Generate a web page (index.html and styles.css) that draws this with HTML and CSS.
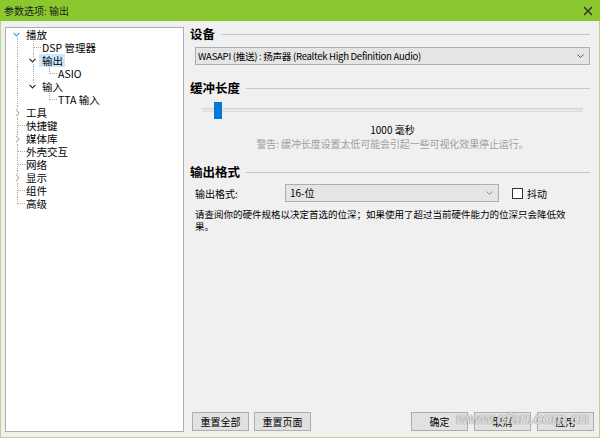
FILE: index.html
```html
<!DOCTYPE html>
<html lang="zh-CN">
<head>
<meta charset="utf-8">
<title>参数选项: 输出</title>
<link rel="stylesheet" href="styles.css">
</head>
<body>
<div class="window">
  <div class="titlebar">
    <span class="title">参数选项: 输出</span>
    <svg class="close" width="10" height="10" viewBox="0 0 10 10"><path d="M1 1L9 9M9 1L1 9" stroke="#2a2a2a" stroke-width="1.3" fill="none"/></svg>
  </div>
  <div class="content">
    <div class="tree">
      <div class="row"><span class="cell exp-first"><svg class="arr-open blue" width="7" height="5" viewBox="0 0 7 5"><path d="M0.5 0.8L3.5 3.8L6.5 0.8" fill="none" stroke="currentColor" stroke-width="1.2"/></svg></span><span class="label">播放</span></div>
      <div class="row"><span class="cell pipe"></span><span class="cell tee"></span><span class="label">DSP 管理器</span></div>
      <div class="row"><span class="cell pipe"></span><span class="cell exp-mid"><svg class="arr-open dark" width="7" height="5" viewBox="0 0 7 5"><path d="M0.5 0.8L3.5 3.8L6.5 0.8" fill="none" stroke="currentColor" stroke-width="1.2"/></svg></span><span class="label selected">输出</span></div>
      <div class="row"><span class="cell pipe"></span><span class="cell pipe"></span><span class="cell elbow"></span><span class="label">ASIO</span></div>
      <div class="row"><span class="cell pipe"></span><span class="cell exp-last"><svg class="arr-open dark" width="7" height="5" viewBox="0 0 7 5"><path d="M0.5 0.8L3.5 3.8L6.5 0.8" fill="none" stroke="currentColor" stroke-width="1.2"/></svg></span><span class="label">输入</span></div>
      <div class="row"><span class="cell pipe"></span><span class="cell"></span><span class="cell elbow"></span><span class="label">TTA 输入</span></div>
      <div class="row"><span class="cell exp-mid"><svg class="arr-closed" width="5" height="8" viewBox="0 0 5 8"><path d="M0.8 0.5L4 4L0.8 7.5" fill="none" stroke="currentColor" stroke-width="1.1"/></svg></span><span class="label">工具</span></div>
      <div class="row"><span class="cell tee"></span><span class="label">快捷键</span></div>
      <div class="row"><span class="cell exp-mid"><svg class="arr-closed" width="5" height="8" viewBox="0 0 5 8"><path d="M0.8 0.5L4 4L0.8 7.5" fill="none" stroke="currentColor" stroke-width="1.1"/></svg></span><span class="label">媒体库</span></div>
      <div class="row"><span class="cell tee"></span><span class="label">外壳交互</span></div>
      <div class="row"><span class="cell tee"></span><span class="label">网络</span></div>
      <div class="row"><span class="cell exp-mid"><svg class="arr-closed" width="5" height="8" viewBox="0 0 5 8"><path d="M0.8 0.5L4 4L0.8 7.5" fill="none" stroke="currentColor" stroke-width="1.1"/></svg></span><span class="label">显示</span></div>
      <div class="row"><span class="cell tee"></span><span class="label">组件</span></div>
      <div class="row"><span class="cell elbow"></span><span class="label">高级</span></div>
    </div>
    <div class="main">
      <section class="group">
        <div class="group-head">设备</div>
        <div class="combo device"><span class="combo-text">WASAPI (推送) : 扬声器 (Realtek High Definition Audio)</span><svg class="chev" width="7" height="4" viewBox="0 0 7 4"><path d="M0.5 0.5L3.5 3.5L6.5 0.5" fill="none" stroke="#555" stroke-width="1"/></svg></div>
      </section>
      <section class="group buffer">
        <div class="group-head">缓冲长度</div>
        <div class="slider"><span class="thumb"></span></div>
        <div class="slider-value">1000 毫秒</div>
        <div class="warn">警告: 缓冲长度设置太低可能会引起一些可视化效果停止运行。</div>
      </section>
      <section class="group format">
        <div class="group-head">输出格式</div>
        <div class="format-row">
          <span class="field-label">输出格式:</span>
          <div class="combo bits"><span>16-位</span><svg class="chev" width="7" height="4" viewBox="0 0 7 4"><path d="M0.5 0.5L3.5 3.5L6.5 0.5" fill="none" stroke="#8a8a8a" stroke-width="1"/></svg></div>
          <span class="check"><span class="box"></span>抖动</span>
        </div>
        <p class="note"><span class="nowrap">请查阅你的硬件规格以决定首选的位深；如果使用了超过当前硬件能力的位深只会降低效</span><br>果。</p>
      </section>
      <div class="buttons">
        <div class="btn-group">
          <button class="btn">重置全部</button>
          <button class="btn">重置页面</button>
        </div>
        <div class="btn-group right">
          <button class="btn">确定</button>
          <button class="btn">取消</button>
          <button class="btn">应用</button>
        </div>
      </div>
    </div>
  </div>
  <div class="watermark">www.cfan.com.cn</div>
</div>
</body>
</html>
```
FILE: styles.css
```css
html, body {
  margin: 0;
  padding: 0;
}
body {
  width: 600px;
  height: 438px;
  overflow: hidden;
  font-family: "Noto Sans CJK SC", sans-serif;
  font-size: 10px;
  color: #000;
  --dv: repeating-linear-gradient(to bottom, #a8a8a8 0 1px, transparent 1px 2px);
  --dh: repeating-linear-gradient(to right, #a8a8a8 0 1px, transparent 1px 2px);
}
.window {
  position: relative;
  height: 438px;
  box-sizing: border-box;
  display: flex;
  flex-direction: column;
  background: #f0f0f0;
  border: 1px solid #b8d48f;
  border-top: none;
}
.titlebar {
  height: 21px;
  flex: none;
  margin: 0 -1px;
  padding: 0 7px 0 4px;
  background: #8bc82f;
  display: flex;
  align-items: center;
  justify-content: space-between;
}
.title {
  font-size: 10px;
  line-height: 21px;
  color: #1c1c1c;
}
.content {
  flex: 1;
  min-height: 0;
  display: flex;
  padding: 6px 5px 5px 4px;
}

/* tree */
.tree {
  width: 179px;
  flex: none;
  box-sizing: border-box;
  border: 1px solid #acaeb3;
  background: #fff;
  font-size: 10.5px;
}
.row {
  display: flex;
  height: 13px;
  line-height: 13px;
  padding-left: 3px;
  white-space: nowrap;
}
.cell {
  width: 16px;
  height: 13px;
  flex: none;
  display: flex;
  align-items: center;
}
.pipe {
  background: var(--dv) 8px 0 / 1px 100% no-repeat;
}
.tee {
  background: var(--dv) 8px 0 / 1px 100% no-repeat, var(--dh) 9px 6px / 7px 1px no-repeat;
}
.elbow {
  background: var(--dv) 8px 0 / 1px 7px no-repeat, var(--dh) 9px 6px / 7px 1px no-repeat;
}
.exp-first {
  background: var(--dv) 8px 7px / 1px 6px no-repeat;
}
.exp-mid {
  background: var(--dv) 8px 0 / 1px 100% no-repeat;
}
.exp-last {
  background: var(--dv) 8px 0 / 1px 6px no-repeat;
}
.cell svg {
  background: #fff;
  display: block;
}
.arr-open {
  margin-left: 4px;
}
.arr-open.blue {
  color: #3ea6e5;
}
.arr-open.dark {
  color: #2b2b2b;
}
.arr-closed {
  margin-left: 6px;
  color: #a8a8a8;
}
.label {
  margin-left: -2px;
  padding: 0 2px 0 3px;
}
.label.selected {
  background: #cce8ff;
}

/* main */
.main {
  flex: 1;
  margin-left: 5px;
  display: flex;
  flex-direction: column;
}
.group-head {
  display: flex;
  align-items: center;
  gap: 6px;
  margin-right: 4px;
  padding-left: 1px;
  font-size: 12.5px;
  font-weight: bold;
  line-height: 14px;
}
.group-head::after {
  content: "";
  flex: 1;
  height: 1px;
  margin-top: 1px;
  background: #c6c6c6;
}
.combo {
  box-sizing: border-box;
  height: 18px;
  border: 1px solid #adadad;
  background: #e5e5e5;
  display: flex;
  align-items: center;
  justify-content: space-between;
  line-height: 16px;
  white-space: nowrap;
}
.combo.device {
  margin: 6px 4px 0 6px;
  padding: 0 5px 0 2px;
}
.combo-text {
  font-size: 9.6px;
  letter-spacing: -0.3px;
}
.buffer {
  margin-top: 16px;
}
.slider {
  height: 17px;
  margin: 7px 11px 0 13px;
  display: flex;
  align-items: center;
  background:
    linear-gradient(#d4d4d4, #d4d4d4) 0 6px / 100% 1px no-repeat,
    linear-gradient(#dcdcdc, #dcdcdc) 0 9px / 100% 1px no-repeat,
    linear-gradient(#e7e7e7, #e7e7e7) 0 6px / 100% 4px no-repeat;
}
.thumb {
  width: 8px;
  height: 17px;
  margin-left: 12px;
  background: #0078d7;
}
.slider-value,
.warn {
  margin: 0 11px 0 13px;
  text-align: center;
  line-height: 14px;
  white-space: nowrap;
}
.slider-value {
  margin-top: 4px;
}
.warn {
  color: #a0a0a0;
  letter-spacing: -0.1px;
}
.format {
  margin-top: 14px;
}
.format-row {
  display: flex;
  align-items: center;
  margin-top: 5px;
  padding-left: 6px;
  height: 18px;
}
.field-label {
  width: 90px;
  flex: none;
}
.combo.bits {
  width: 214px;
  padding: 0 5px 0 4px;
}
.check {
  display: flex;
  align-items: center;
  margin-left: 13px;
}
.box {
  width: 11px;
  height: 11px;
  box-sizing: border-box;
  border: 1px solid #333;
  background: #fff;
  margin-right: 4px;
}
.note {
  margin: 6px 0 0;
  padding-left: 6px;
  font-size: 9.5px;
  line-height: 12px;
}
.nowrap {
  white-space: nowrap;
}
.buttons {
  margin-top: auto;
  margin-bottom: 1px;
  padding-left: 3px;
  display: flex;
  justify-content: space-between;
}
.btn-group {
  display: flex;
  gap: 5px;
}
.btn-group.right {
  gap: 6px;
}
.btn {
  width: 57px;
  height: 19px;
  box-sizing: border-box;
  padding: 0;
  border: 1px solid #adadad;
  background: #e1e1e1;
  font-family: inherit;
  font-size: 10px;
  line-height: 17px;
  color: #000;
}
.watermark {
  position: absolute;
  left: 455px;
  top: 409px;
  font-family: "Liberation Sans", sans-serif;
  font-style: italic;
  font-weight: bold;
  font-size: 16.5px;
  letter-spacing: -0.4px;
  color: rgba(255, 255, 255, 0.72);
  text-shadow: 0 0 1px #7d7d7d, 0 0 1px #9a9a9a;
  pointer-events: none;
}
```
